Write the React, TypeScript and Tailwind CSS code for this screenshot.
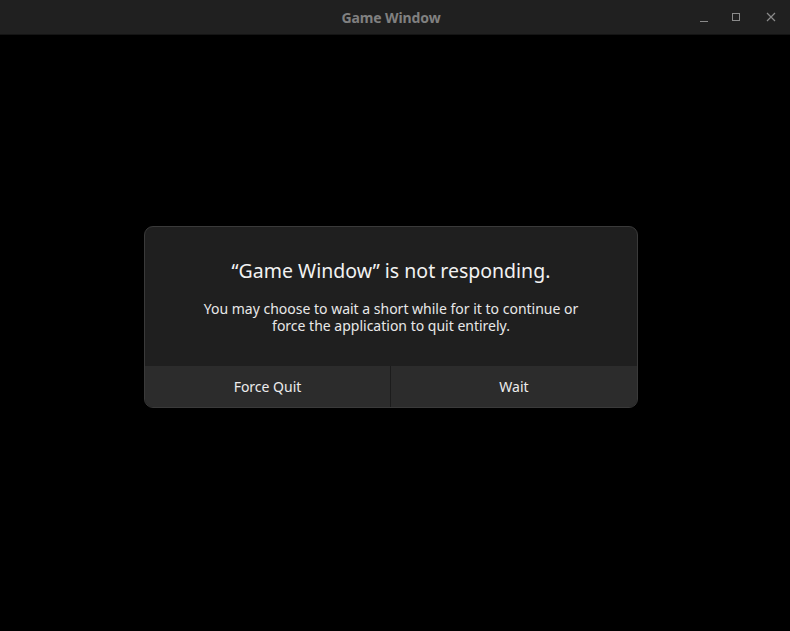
export default function App() {
  return (
    <div
      className="w-[790px] h-[631px] bg-black flex flex-col overflow-hidden"
      style={{ fontFamily: '"Noto Sans", "Open Sans", sans-serif' }}
    >
      <header className="h-[35px] shrink-0 bg-[#202020] border-b border-[#141414] flex items-center relative">
        <div className="flex-1 text-center text-[14px] font-bold text-[#808080] tracking-[-0.1px] pr-[8px]">
          Game Window
        </div>
        <div className="absolute right-0 top-0 h-[34px] flex items-center">
          <button className="w-[32px] h-[34px] flex items-center justify-center">
            <svg width="10" height="10" viewBox="0 0 10 10">
              <path d="M1 9.5h8" stroke="#8a8a8a" strokeWidth="1" />
            </svg>
          </button>
          <button className="w-[32px] h-[34px] flex items-center justify-center">
            <svg width="10" height="10" viewBox="0 0 10 10">
              <rect x="1.5" y="1.5" width="7" height="7" fill="none" stroke="#8a8a8a" strokeWidth="1" />
            </svg>
          </button>
          <button className="w-[38px] h-[34px] flex items-center justify-center">
            <svg width="10" height="10" viewBox="0 0 10 10">
              <path d="M1 1l8 8M9 1l-8 8" stroke="#8a8a8a" strokeWidth="1.2" />
            </svg>
          </button>
        </div>
      </header>

      <main className="flex-1 flex items-start pl-[144px] pt-[191px]">
        <div className="w-[494px] rounded-[9px] border border-[#3a3a3a] bg-[#1f1f1f] overflow-hidden">
          <div className="pt-[31px] pb-[32px] px-6 text-center">
            <h1 className="text-[19.5px] leading-[26px] text-[#f2f2f2]">
              “Game Window” is not responding.
            </h1>
            <p className="mt-[16px] text-[14px] leading-[17px] text-[#e8e8e8]">
              You may choose to wait a short while for it to continue or
              <br />
              force the application to quit entirely.
            </p>
          </div>
          <div className="grid grid-cols-2 h-[41px] bg-[#2c2c2c]">
            <button className="text-[14px] text-[#ececec] border-r border-[#1c1c1c]">Force Quit</button>
            <button className="text-[14px] text-[#ececec]">Wait</button>
          </div>
        </div>
      </main>
    </div>
  )
}
